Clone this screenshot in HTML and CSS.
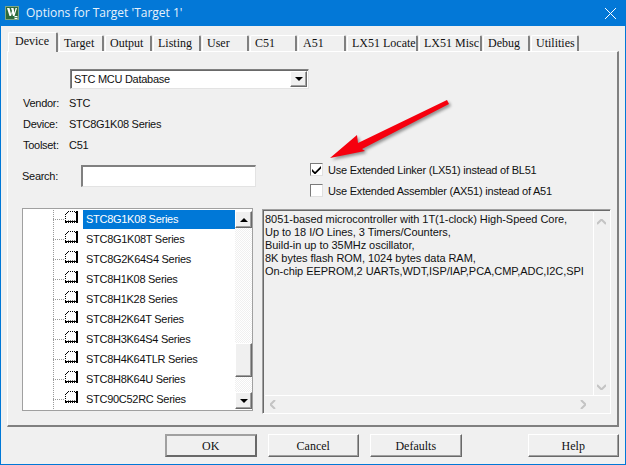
FILE: index.html
```html
<!DOCTYPE html>
<html lang="en">
<head>
<meta charset="utf-8">
<title>Options for Target 'Target 1'</title>
<link rel="stylesheet" href="styles.css">
</head>
<body>
<svg class="defs" width="0" height="0" aria-hidden="true">
  <symbol id="chip" viewBox="0 0 13 12">
    <path d="M3 0h10v12H0V3h1V2h1V1h1z" fill="#fff"/>
    <path d="M3 0h1v1H3zM5 0h1v1H5zM7 0h1v1H7zM9 0h1v1H9zM10 1h2v1h-2zM11 0h2v10h-2z" fill="#000"/>
    <path d="M2 1h1v1H2zM1 2h1v1H1zM0 3h1v1H0zM0 5h1v1H0zM0 7h1v1H0zM0 9h1v1H0z" fill="#000"/>
    <path d="M0 10h13v2H0z" fill="#000"/>
    <path d="M2 11h1v1H2zM4 11h1v1H4zM6 11h1v1H6zM8 11h1v1H8zM10 11h1v1h-1z" fill="#fff"/>
    <path d="M3 9h1v1H3zM5 9h1v1H5zM7 9h1v1H7zM9 9h1v1H9z" fill="#777"/>
  </symbol>
</svg>
<div class="window">
  <header class="titlebar">
    <svg class="app-icon" viewBox="0 0 14 14" width="14" height="14">
      <rect width="14" height="14" fill="#2f6b3c"/>
      <rect x="0.5" y="0.5" width="13" height="13" fill="none" stroke="#7ea585"/>
      <path d="M2 2h2.500l1.500 6 1-3-1-3h2.500l1 5 1-5H12l-2.500 8H8L7 7l-1 3H4.500z" fill="#fff"/>
      <path d="M9.500 10h3v1h-2v.500h2V13h-3v-1h2v-.500h-2z" fill="#fff"/>
    </svg>
    <span class="title">Options for Target 'Target 1'</span>
    <svg class="close" viewBox="0 0 11 11" width="11" height="11">
      <path d="M0 0L11 11M11 0L0 11" stroke="#fff" stroke-width="1" fill="none"/>
    </svg>
  </header>

  <main class="client">
    <nav class="tabs">
      <span class="tab active t-device">Device</span>
      <span class="tab t-target">Target</span>
      <span class="tab t-output">Output</span>
      <span class="tab t-listing">Listing</span>
      <span class="tab t-user">User</span>
      <span class="tab t-c51">C51</span>
      <span class="tab t-a51">A51</span>
      <span class="tab t-locate">LX51 Locate</span>
      <span class="tab t-misc">LX51 Misc</span>
      <span class="tab t-debug">Debug</span>
      <span class="tab t-util">Utilities</span>
    </nav>

    <section class="panel">
      <div class="top">
        <div class="info">
          <div class="select">
            <span class="select-value">STC MCU Database</span>
            <span class="btn3d select-btn"><i class="tri down"></i></span>
          </div>
          <div class="field f-vendor"><span class="label">Vendor:</span><span>STC</span></div>
          <div class="field f-device"><span class="label">Device:</span><span>STC8G1K08 Series</span></div>
          <div class="field f-toolset"><span class="label">Toolset:</span><span>C51</span></div>
          <div class="search-row">
            <span class="search-label">Search:</span>
            <span class="search-input"></span>
          </div>
        </div>
        <div class="options">
          <div class="check-row">
            <span class="checkbox">
              <svg viewBox="0 0 9 9" width="9" height="9"><path d="M0 4l3 3 6-6v2.500L3 9.500 0 6.500z" fill="#000"/></svg>
            </span>
            <span>Use Extended Linker (LX51) instead of BL51</span>
          </div>
          <div class="check-row">
            <span class="checkbox"></span>
            <span>Use Extended Assembler (AX51) instead of A51</span>
          </div>
        </div>
      </div>

      <div class="lists">
        <div class="tree">
          <ul class="tree-items">
            <li class="tree-item selected"><i class="dots"></i><svg class="chip"><use href="#chip"/></svg><span class="tree-text">STC8G1K08 Series</span></li>
            <li class="tree-item"><i class="dots"></i><svg class="chip"><use href="#chip"/></svg><span class="tree-text">STC8G1K08T Series</span></li>
            <li class="tree-item"><i class="dots"></i><svg class="chip"><use href="#chip"/></svg><span class="tree-text">STC8G2K64S4 Series</span></li>
            <li class="tree-item"><i class="dots"></i><svg class="chip"><use href="#chip"/></svg><span class="tree-text">STC8H1K08 Series</span></li>
            <li class="tree-item"><i class="dots"></i><svg class="chip"><use href="#chip"/></svg><span class="tree-text">STC8H1K28 Series</span></li>
            <li class="tree-item"><i class="dots"></i><svg class="chip"><use href="#chip"/></svg><span class="tree-text">STC8H2K64T Series</span></li>
            <li class="tree-item"><i class="dots"></i><svg class="chip"><use href="#chip"/></svg><span class="tree-text">STC8H3K64S4 Series</span></li>
            <li class="tree-item"><i class="dots"></i><svg class="chip"><use href="#chip"/></svg><span class="tree-text">STC8H4K64TLR Series</span></li>
            <li class="tree-item"><i class="dots"></i><svg class="chip"><use href="#chip"/></svg><span class="tree-text">STC8H8K64U Series</span></li>
            <li class="tree-item"><i class="dots"></i><svg class="chip"><use href="#chip"/></svg><span class="tree-text">STC90C52RC Series</span></li>
          </ul>
          <div class="vscroll">
            <span class="btn3d sb-btn"><i class="tri up"></i></span>
            <span class="sb-space sb-space-a"></span>
            <span class="btn3d sb-thumb"></span>
            <span class="sb-space sb-space-b"></span>
            <span class="btn3d sb-btn"><i class="tri down"></i></span>
          </div>
        </div>

        <div class="desc">
          <div class="desc-main">
            <div class="desc-text">8051-based microcontroller with 1T(1-clock) High-Speed Core,<br>Up to 18 I/O Lines, 3 Timers/Counters,<br>Build-in up to 35MHz oscillator,<br>8K bytes flash ROM, 1024 bytes data RAM,<br>On-chip EEPROM,2 UARTs,WDT,ISP/IAP,PCA,CMP,ADC,I2C,SPI</div>
            <div class="desc-v">
              <svg viewBox="0 0 9 6" width="9" height="6"><path d="M0 5l4.500-4.500 4.500 4.500" fill="none" stroke="#c4c4c4" stroke-width="2"/></svg>
              <svg viewBox="0 0 9 6" width="9" height="6"><path d="M0 1l4.500 4.500 4.500-4.500" fill="none" stroke="#c4c4c4" stroke-width="2"/></svg>
            </div>
          </div>
          <div class="desc-h">
            <svg viewBox="0 0 6 9" width="6" height="9"><path d="M5 0L.5 4.500 5 9" fill="none" stroke="#c4c4c4" stroke-width="2"/></svg>
            <svg viewBox="0 0 6 9" width="6" height="9"><path d="M1 0l4.500 4.500L1 9" fill="none" stroke="#c4c4c4" stroke-width="2"/></svg>
          </div>
        </div>
      </div>

      <svg class="arrow" viewBox="0 0 130 70" width="130" height="70">
        <defs>
          <filter id="soft" x="-20%" y="-40%" width="140%" height="180%"><feGaussianBlur stdDeviation="1.500"/></filter>
        </defs>
        <path d="M2 61L29 38 30 46 119 3 121 7 34 52 37 54z" fill="#555" opacity=".6" filter="url(#soft)"/>
        <path d="M0 59L27 36 28 44 117 1 119 5 32 50 35 52z" fill="#f6000e"/>
      </svg>
    </section>

    <footer class="buttons">
      <span class="btn btn-ok">OK</span>
      <span class="btn">Cancel</span>
      <span class="btn">Defaults</span>
      <span class="btn btn-help">Help</span>
    </footer>
  </main>
</div>
</body>
</html>
```
FILE: styles.css
```css
* { box-sizing: border-box; }
html, body { margin: 0; padding: 0; }
body { width: 626px; height: 465px; overflow: hidden; background: #0078d7; }
.defs { position: absolute; }
ul { list-style: none; margin: 0; padding: 0; }

.window {
  width: 626px; height: 465px;
  display: flex; flex-direction: column;
  padding: 0 1px 1px;
  font: 11px/14px "Liberation Sans", Arial, sans-serif;
  letter-spacing: -.28px;
  color: #111;
}
.titlebar {
  height: 26px; flex: none;
  display: flex; align-items: center;
  background: #0378d7; color: #fff;
  padding: 0 0 0 4px;
  letter-spacing: 0;
}
.app-icon { flex: none; }
.title { margin-left: 7px; font: 12px/16px "Open Sans", sans-serif; color: #e8f2fb; flex: 1; }
.close { margin-right: 9px; }

.client {
  flex: 1; display: flex; flex-direction: column;
  background: #f0f0f0;
  padding: 6px 6px 0 6px;
}

/* tabs */
.tabs { display: flex; align-items: flex-end; height: 19px; font: 12px/14px "Liberation Serif", serif; letter-spacing: 0; padding-left: 1px; position: relative; z-index: 1; }
.tab {
  height: 16px; margin-right: 1px;
  padding: 0 0 0 4px;
  background: #f0f0f0;
  border-top: 1px solid #fff; border-left: 1px solid #fff;
  border-right: 2px solid #808080;
  border-radius: 2px 2px 0 0;
  white-space: nowrap;
  color: #111;
  overflow: hidden;
}
.tab.active { height: 20px; margin-bottom: -1px; padding: 1px 0 0 6px; border-bottom: 0; }
.t-device { width: 50px; }
.t-target { width: 45px; }
.t-output { width: 47px; }
.t-listing { width: 48px; }
.t-user { width: 47px; }
.t-c51 { width: 47px; }
.t-a51 { width: 48px; }
.t-locate { width: 71px; }
.t-misc { width: 63px; }
.t-debug { width: 47px; }
.t-util { width: 48px; }

/* panel */
.panel {
  position: relative;
  height: 376px; width: 612px; flex: none;
  border-top: 1px solid #fff; border-left: 1px solid #fff;
  border-right: 2px solid #808080; border-bottom: 2px solid #808080;
  padding: 17px 0 0 15px;
}
.top { display: flex; height: 139px; flex: none; }
.info { width: 286px; flex: none; display: flex; flex-direction: column; }
.select {
  margin-left: 47px; height: 20px;
  display: flex; background: #fff;
  border: 1px solid #a0a0a0; border-top-color: #808080; border-left-color: #808080;
  border-right-color: #e3e3e3; border-bottom-color: #e3e3e3;
  box-shadow: inset 1px 1px 0 #696969;
}
.select-value { flex: 1; padding: 2px 0 0 3px; line-height: 15px; }
.select-btn { width: 17px; margin: 1px; }
.btn3d {
  display: flex; align-items: center; justify-content: center;
  background: #f0f0f0;
  border: 1px solid; border-color: #fff #696969 #696969 #fff;
  box-shadow: inset -1px -1px 0 #a0a0a0;
}
.tri { display: block; width: 0; height: 0; border-left: 4px solid transparent; border-right: 4px solid transparent; }
.tri.down { border-top: 4px solid #000; }
.tri.up { border-bottom: 4px solid #000; }

.field { display: flex; height: 21px; align-items: center; }
.field .label { width: 46px; flex: none; }
.f-vendor { margin-top: 3px; }
.search-row { display: flex; align-items: center; margin-top: 10px; }
.search-label { width: 58px; flex: none; margin-left: -1px; }
.search-input {
  width: 175px; height: 22px; background: #fff; margin-left: 1px;
  border: 1px solid #fff; border-top: 2px solid #808080; border-left: 2px solid #808080;
  border-right-color: #e3e3e3; border-bottom-color: #e3e3e3;
}

.options { margin: 94px 0 0 1px; letter-spacing: -.22px; }
.check-row { display: flex; align-items: center; gap: 5px; height: 13px; margin-bottom: 8px; white-space: nowrap; }
.checkbox {
  width: 13px; height: 13px; flex: none; background: #fff;
  display: flex; align-items: center; justify-content: center;
  border: 1px solid #7a7a7a; border-right-color: #e0e0e0; border-bottom-color: #e0e0e0;
}

.lists { display: flex; align-items: flex-start; margin-left: -1px; }
.tree {
  width: 231px; height: 203px; flex: none;
  background: #fff; border: 1px solid #a0a0a0;
  padding: 1px 0 0 0;
  display: flex;
}
.tree-items {
  width: 212px; flex: none; background-color: #fff;
  background-image: linear-gradient(#9a9a9a 50%, transparent 50%);
  background-size: 1px 2px; background-position: 30px 0; background-repeat: repeat-y;
}
.tree-item { height: 20px; display: flex; align-items: flex-start; padding-left: 30px; color: #111; }
.dots { width: 12px; flex: none; height: 1px; margin-top: 9px; background-image: linear-gradient(90deg, #9a9a9a 50%, transparent 50%); background-size: 2px 1px; }
.chip { width: 13px; height: 12px; flex: none; margin-right: 5px; margin-top: 1px; }
.tree-text { flex: 1; height: 19px; line-height: 19px; padding-left: 3px; white-space: nowrap; }
.selected .tree-text { background: #0078d7; color: #fff; }
.vscroll { width: 17px; flex: none; display: flex; flex-direction: column; height: 198px; margin-top: 1px; }
.sb-btn { height: 17px; flex: none; }
.sb-thumb { height: 34px; flex: none; }
.sb-space {
  background-color: #fff;
  background-image: repeating-conic-gradient(#f0f0f0 0 25%, #fff 0 50%);
  background-size: 2px 2px;
}
.sb-space-a { height: 115px; flex: none; }
.sb-space-b { flex: 1; }

.desc {
  width: 349px; height: 205px; flex: none;
  margin: 1px 0 0 9px;
  border: 1px solid; border-color: #a0a0a0 #fff #fff #a0a0a0;
  box-shadow: inset 1px 1px 0 #696969;
  display: flex; flex-direction: column;
  padding: 2px 0 0 2px;
}
.desc-main { flex: 1; display: flex; min-height: 0; }
.desc-text { flex: 1; line-height: 13px; letter-spacing: -.05px; white-space: nowrap; padding-top: 1px; }
.desc-v { width: 16px; margin-right: 1px; border-left: 1px solid #fff; flex: none; display: flex; flex-direction: column; justify-content: space-between; align-items: center; padding: 7px 0 5px; }
.desc-h { height: 18px; flex: none; border-top: 1px solid #fff; display: flex; justify-content: space-between; align-items: center; padding: 0 24px 0 5px; }

.arrow { position: absolute; left: 322px; top: 47px; }

/* footer */
.buttons { display: flex; margin-top: 7px; padding-left: 158px; font: 12px/14px "Liberation Serif", serif; letter-spacing: 0; }
.btn {
  width: 92px; height: 23px; margin-right: 11px;
  display: flex; align-items: center; justify-content: center;
  background: #f0f0f0;
  border: 1px solid; border-color: #fff #696969 #696969 #fff;
  box-shadow: inset -1px -1px 0 #a0a0a0;
}
.btn-ok { border: 2px solid; border-color: #a0a0a0 #696969 #696969 #a0a0a0; box-shadow: none; }
.btn-help { margin: 0 0 0 55px; }
```
